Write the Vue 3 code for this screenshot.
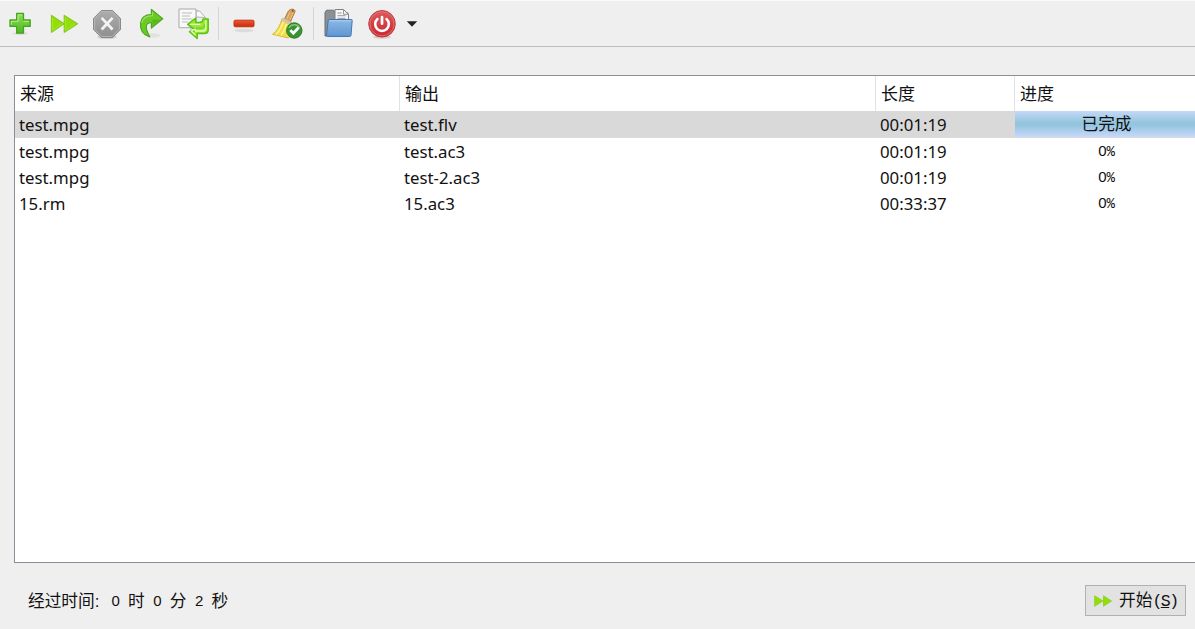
<template>
  <div class="window">
    <div class="toolbar">
      <button class="tool" title="添加">
        <svg viewBox="0 0 32 32">
          <defs>
            <linearGradient id="gPlus" x1="0" y1="0" x2="0" y2="1">
              <stop offset="0" stop-color="#8fdc55" /><stop offset="1" stop-color="#4db822" />
            </linearGradient>
          </defs>
          <ellipse cx="16" cy="25.5" rx="8" ry="1.5" fill="#ddd" />
          <path d="M12.7 5.5h6.8v6.5h6.7v6.4h-6.7v6.8h-6.8v-6.8H6V12h6.7z" fill="url(#gPlus)" stroke="#45a31e" stroke-width="1.3" stroke-linejoin="round" />
          <path d="M18.3 6.8h-4.2v6.5H7.3v3.5M19.4 13.3h5.5" fill="none" stroke="#b6ee90" />
        </svg>
      </button>
      <button class="tool" title="开始">
        <svg viewBox="0 0 32 32">
          <path d="M3.5 7.5L16 15.8L3.5 24.2zM16.3 7.5L29.5 15.8L16.3 24.2z" fill="#93de06" stroke="#86cc20" stroke-width="1.3" stroke-linejoin="round" />
          <path d="M4.6 9.5v12.6L14 15.8M17.4 9.5v12.6L27 15.8" fill="none" stroke="#a7ea24" />
        </svg>
      </button>
      <button class="tool" title="停止">
        <svg viewBox="0 0 32 32">
          <defs>
            <linearGradient id="gStop" x1="0" y1="0" x2="0" y2="1">
              <stop offset="0" stop-color="#adadad" /><stop offset="1" stop-color="#8e8e8e" />
            </linearGradient>
          </defs>
          <ellipse cx="16" cy="29" rx="10" ry="2" fill="#d0d0d0" />
          <path d="M10.4 2.5h11.2l7.9 7.9v11.2l-7.9 7.9H10.4l-7.9-7.9V10.4z" fill="url(#gStop)" stroke="#8a8a8a" />
          <path d="M10.8 3.6h10.4l7.2 7.2v10.4l-7.2 7.2H10.8l-7.2-7.2V10.8z" fill="none" stroke="#b9b9b9" stroke-width=".9" />
          <path d="M10.6 9.9l11 11.6M21.6 9.9l-11 11.6" stroke="#f3f3f3" stroke-width="2.7" />
        </svg>
      </button>
      <button class="tool" title="重做">
        <svg viewBox="0 0 32 32">
          <ellipse cx="18" cy="27.5" rx="7.5" ry="2.2" fill="#dfe2dd" />
          <path d="M16.4 1.4L27.7 10.8L16.4 20v-5.2c-5.5-.4-7.5 4-1.6 14C8.5 27 5 22 5.5 15.5C6 10 10 6.5 16.4 6.5z" fill="#6bcb25" stroke="#4fa520" stroke-width="1.2" stroke-linejoin="round" />
          <path d="M17.4 4.2v3.6c-5.5 0-9.5 2-10.6 7" fill="none" stroke="#a3e06e" stroke-width="1.1" />
          <path d="M17.5 11.5h7.6L17.5 17.3z" fill="#55b91a" />
        </svg>
      </button>
      <button class="tool" title="转换">
        <svg viewBox="0 0 32 32">
          <path d="M13 3h8l6.5 7v14H13z" fill="#eee" stroke="#bbb" />
          <path d="M18 3h3.5l6 6.5L18 9z" fill="#fafafa" stroke="#b5b5b5" />
          <path d="M1 1h17v18.7H1z" fill="#f9f9f9" stroke="#a9a9a9" />
          <path d="M4 5h10M4 8h8M4 11h10M4 14h6" stroke="#bbb" stroke-width="1.2" />
          <path d="M25 11h5.2v10.8c0 2.5-1.2 3.8-4 3.8h-7v4.9l-7.7-6.9h4.2v-2.5l-6-4.7l8-6.4v4.5H21c2.8 0 4-1 4-3.5z" fill="#98e838" stroke="#5fc016" stroke-width="1.5" stroke-linejoin="round" />
          <path d="M27.8 12.2v8c0 2.2-1 2.8-3 2.8h-7.4v-2.7l-3.8 3.3l3.8 3.4M12 16.4h10.5" fill="none" stroke="#e4ffaf" stroke-width="1.3" />
          <path d="M15 20.1h8c2.5 0 3.5-1.3 3.5-3.5" fill="none" stroke="#67c51c" />
        </svg>
      </button>
      <span class="sep first"></span>
      <button class="tool" title="移除">
        <svg viewBox="0 0 32 32">
          <defs>
            <linearGradient id="gMinus" x1="0" y1="0" x2="0" y2="1">
              <stop offset="0" stop-color="#ee5a35" /><stop offset="1" stop-color="#c8290a" />
            </linearGradient>
          </defs>
          <ellipse cx="16" cy="22.5" rx="9.5" ry="1.8" fill="#dcdcdc" />
          <rect x="6" y="12.2" width="20" height="6.6" rx="1.2" fill="url(#gMinus)" stroke="#c13418" />
        </svg>
      </button>
      <button class="tool" title="清除">
        <svg viewBox="0 0 32 32">
          <path d="M13.5 11L17 3.8C18.5.5 24.3.3 24 3.6L21.5 9L19.4 14z" fill="#d9a45c" stroke="#a8773a" />
          <path d="M18.6 4.6l-2.5 6M22 5l-2.7 6.5" stroke="#f0c583" />
          <path d="M21.2 1.9l1 1.7" stroke="#7d5423" stroke-width="1.4" />
          <path d="M11 10.6l9.8 5.1c1.8 5 0 10.2-3.4 14.3L1.5 26.3C6.3 23 9.5 16.7 11 10.6z" fill="#f2dd48" stroke="#d9bd3a" stroke-linejoin="round" />
          <path d="M12.3 14c-1.7 5.3-4 9.2-7.3 12.5M15.5 16c-1.2 5-3 8.4-5.5 11.5" fill="none" stroke="#fff49a" stroke-width="1.4" />
          <path d="M11 11l10 5.2" stroke="#cfc5b4" stroke-width="3.2" />
          <circle cx="23.3" cy="22.5" r="7.7" fill="#38942f" stroke="#2d7d2b" />
          <path d="M17.8 19.8a6.5 6.5 0 0 1 11 0" fill="none" stroke="#86c47a" stroke-width="1.3" />
          <path d="M19.3 22.1l3 3.2l5.4-5.8" fill="none" stroke="#fff" stroke-width="2.8" />
        </svg>
      </button>
      <span class="sep second"></span>
      <button class="tool folder" title="打开文件夹">
        <svg viewBox="0 0 32 32">
          <defs>
            <linearGradient id="gFolder" x1="0" y1="0" x2="0" y2="1">
              <stop offset="0" stop-color="#8db8e5" /><stop offset="1" stop-color="#5f96d2" />
            </linearGradient>
          </defs>
          <path d="M3 28V4.5L4.5 2.2h7.2L13 5h13v23z" fill="#8c8f93" stroke="#6a6d70" />
          <path d="M13 1.5h8.5l5 4.8v8H13z" fill="#f5f5f5" stroke="#808080" />
          <path d="M21.5 1.5v4.8h4.8M15.5 5h4M15.5 7.7h8M15.5 10.3h8" fill="none" stroke="#999" />
          <path d="M7.2 11.5h22.2c.7 0 .9.4.8 1L29 27.2c0 .9-.5 1.2-1.3 1.2H5.4c-.7 0-1.1-.4-.9-1.2L6.2 12.6c.1-.7.4-1.1 1-1.1z" fill="url(#gFolder)" stroke="#3f78ba" />
          <path d="M7.4 12.8h21.5" stroke="#b3d0ef" />
        </svg>
      </button>
      <button class="tool" title="关机">
        <svg viewBox="0 0 32 32">
          <defs>
            <linearGradient id="gPower" x1="0" y1="0" x2="0" y2="1">
              <stop offset="0" stop-color="#dd5a5d" /><stop offset="1" stop-color="#c8272d" />
            </linearGradient>
          </defs>
          <ellipse cx="16" cy="29" rx="9" ry="1.7" fill="#d6d0d0" />
          <circle cx="16" cy="15.8" r="13.3" fill="url(#gPower)" stroke="#c04146" />
          <circle cx="16" cy="15.8" r="12" fill="none" stroke="#e07c7e" stroke-width=".8" />
          <path d="M11.5 11a6.8 6.8 0 1 0 9 0" fill="none" stroke="#fff" stroke-width="2.5" stroke-linecap="round" />
          <path d="M16 9v6.7" stroke="#fff" stroke-width="2.7" stroke-linecap="round" />
        </svg>
      </button>
      <svg class="drop" viewBox="0 0 12 6"><path d="M.8.3h10.4L6 5.8z" fill="#222" /></svg>
    </div>

    <div class="list">
      <div class="row head">
        <div v-for="c in columns" :key="c" class="cell">{{ c }}</div>
      </div>
      <div
        v-for="(job, i) in jobs"
        :key="i"
        :class="['row', 'job', { selected: i === selected }]"
        @click="selected = i"
      >
        <div class="cell">{{ job.source }}</div>
        <div class="cell">{{ job.output }}</div>
        <div class="cell">{{ job.length }}</div>
        <div v-if="job.progress === 100" class="progress done">已完成</div>
        <div v-else class="progress">{{ job.progress }}<span class="pct">%</span></div>
      </div>
    </div>

    <div class="footer">
      <div class="elapsed">经过时间<span class="colon">:</span> <b>0</b> 时 <b>0</b> 分 <b>2</b> 秒</div>
      <button class="start">
        <svg viewBox="0 0 18 12">
          <path d="M.7.8L9 6L.7 11.2zM9.5.8L17.5 6L9.5 11.2z" fill="#93de06" stroke="#8fd433" stroke-linejoin="round" />
        </svg>
        <span class="label">开始<span class="key">(<u>S</u>)</span></span>
      </button>
    </div>
  </div>
</template>

<script setup>
import { ref } from 'vue'

const columns = ['来源', '输出', '长度', '进度']

const jobs = ref([
  { source: 'test.mpg', output: 'test.flv', length: '00:01:19', progress: 100 },
  { source: 'test.mpg', output: 'test.ac3', length: '00:01:19', progress: 0 },
  { source: 'test.mpg', output: 'test-2.ac3', length: '00:01:19', progress: 0 },
  { source: '15.rm', output: '15.ac3', length: '00:33:37', progress: 0 }
])

const selected = ref(0)
</script>

<style>
body { margin: 0; background: #efefef; overflow: hidden; }
</style>

<style scoped>
.window { width: 1195px; height: 629px; display: flex; flex-direction: column; background: #efefef; color: #111; overflow: hidden; font-family: "Noto Sans", "Noto Sans CJK SC", sans-serif; box-sizing: border-box; border-top: 1px solid #fafafa; }
button { padding: 0; border: 0; background: none; font: inherit; color: inherit; }
.toolbar { height: 45px; flex: none; display: flex; align-items: center; border-bottom: 1px solid #bdbdbd; padding-left: 4px; }
.tool { width: 32px; height: 32px; flex: none; margin-right: 11.5px; }
.tool svg { width: 32px; height: 32px; display: block; }
.sep { width: 1px; height: 33px; background: #d5d5d5; flex: none; }
.sep.first { margin: 0 8.5px 0 -3.5px; }
.sep.second { margin: 0 8px 0 -2px; }
.tool.folder { margin-right: 12.5px; }
.drop { width: 12px; height: 6px; margin-left: -4px; }

.list { width: 1200px; height: 488px; flex: none; margin: 28px 0 0 14px; background: #fff; border: 1px solid #8b8d98; box-sizing: border-box; }
.row { display: grid; grid-template-columns: 385px 476px 139px 183px; width: 1183px; }
.head { height: 35px; font-size: 17px; line-height: 34px; font-family: "Noto Sans CJK SC", sans-serif; }
.head .cell { padding-left: 5px; border-right: 1px solid #e2e2e2; }
.head .cell:last-child { border-right: 0; }
.job { height: 26.3px; line-height: 28px; font-size: 16.8px; }
.job .cell { padding-left: 4px; }
.job.selected { height: 26.6px; background: #d9d9d9; }
.progress { text-align: center; font-family: "Liberation Sans", "Noto Sans CJK SC", sans-serif; font-size: 15px; line-height: 25px; }
.progress.done { font-size: 16.7px; line-height: 28px; height: 26px; background: linear-gradient(#c4d8f8, #94c5de 45%, #94c5de 55%, #c8d8fc); }
.pct { font-family: "Liberation Mono", monospace; font-size: 14px; }

.footer { flex: 1; display: flex; justify-content: space-between; align-items: flex-start; padding: 22px 9px 0 28px; }
.elapsed { font-family: "Liberation Sans", "Noto Sans CJK SC", sans-serif; font-size: 16.7px; line-height: 34px; word-spacing: 3.7px; }
.elapsed b { font-weight: normal; font-size: 15px; vertical-align: 1px; line-height: 1; }
.colon { letter-spacing: 3.7px; }
.start { width: 101px; height: 31px; box-sizing: border-box; border: 1px solid #adb2b5; background: #e2e2e2; display: flex; align-items: center; padding-left: 8px; }
.start svg { width: 18px; height: 12px; flex: none; margin-right: 7px; }
.label { font-family: "Noto Sans CJK SC", sans-serif; font-size: 16.7px; line-height: 28px; white-space: nowrap; }
.key { font-family: "Liberation Mono", monospace; font-size: 16.5px; letter-spacing: -1.5px; }
</style>
